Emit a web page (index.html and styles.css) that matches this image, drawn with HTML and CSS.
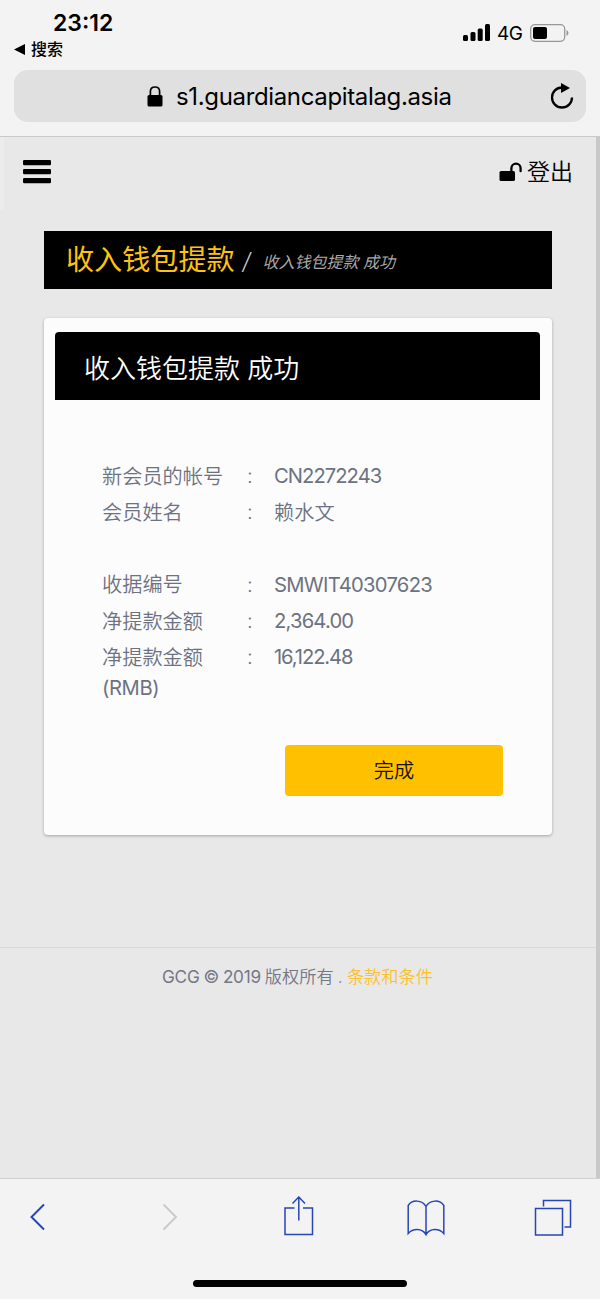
FILE: index.html
```
<!DOCTYPE html>
<html lang="zh-CN">
<head>
<meta charset="utf-8">
<meta name="viewport" content="width=device-width">
<title>收入钱包提款</title>
<link rel="stylesheet" href="styles.css">
</head>
<body>
<div class="phone">
  <header class="chrome">
    <div class="status">
      <div class="status-left">
        <div class="time">23:12</div>
        <div class="back-app">
          <svg width="11" height="11" viewBox="0 0 11 11"><path d="M0 5.5 11 0V11Z"/></svg>
          <span>搜索</span>
        </div>
      </div>
      <div class="status-right">
        <svg width="28" height="18" viewBox="0 0 28 18"><rect x="0" y="11" width="5" height="6" rx="1.5"/><rect x="7.5" y="8" width="5" height="9" rx="1.5"/><rect x="14.7" y="4.5" width="5" height="12.5" rx="1.5"/><rect x="22" y="0" width="5" height="17" rx="1.5"/></svg>
        <span class="network">4G</span>
        <svg width="39" height="18" viewBox="0 0 39 18"><rect x=".7" y=".7" width="34" height="16.6" rx="4.2" fill="none" stroke="#989898" stroke-width="1.3"/><rect x="3" y="3" width="14" height="12" rx="2"/><path d="M36.5 6Q38.5 7 38.5 9T36.5 12Z" fill="#989898"/></svg>
      </div>
    </div>
    <div class="address">
      <svg class="lock" width="16" height="21" viewBox="0 0 16 21"><path d="M3.4 10V5.4C3.4 2.4 5.3 1 8 1s4.6 1.4 4.6 4.4V10" fill="none" stroke="#000" stroke-width="1.7"/><rect x=".5" y="9" width="15" height="11.5" rx="1.5"/></svg>
      <span class="url">s1.guardiancapitalag.asia</span>
      <svg class="reload" width="24" height="27" viewBox="0 0 24 27"><path d="M12 4.5A10 10 0 1 0 22 14.5" fill="none" stroke="#000" stroke-width="2.3"/><path d="M11 0 20 5 11 10Z"/></svg>
    </div>
  </header>
  <main class="page">
    <div class="edge"></div>
    <nav class="nav">
      <svg width="28" height="24" viewBox="0 0 28 24"><rect y="0" width="28" height="5.2" rx="1.2"/><rect y="9" width="28" height="5.2" rx="1.2"/><rect y="18" width="28" height="5.2" rx="1.2"/></svg>
      <div class="logout">
        <svg width="23" height="20" viewBox="0 0 23 20"><rect x="0.5" y="9" width="15.5" height="10" rx="1.6"/><path d="M12.4 10V6.2a4.6 4.6 0 0 1 9.2 0V9.2" fill="none" stroke="#000" stroke-width="2.3" stroke-linecap="round"/></svg>
        <span>登出</span>
      </div>
    </nav>
    <div class="crumb"><span class="crumb-title">收入钱包提款</span><span class="crumb-sep">/</span><span class="crumb-sub">收入钱包提款 成功</span></div>
    <section class="card">
      <h1 class="card-head">收入钱包提款 成功</h1>
      <dl class="details">
        <dt>新会员的帐号</dt><dd class="colon">:</dd><dd class="latin w-account">CN2272243</dd>
        <dt>会员姓名</dt><dd class="colon">:</dd><dd>赖水文</dd>
        <dt class="group">收据编号</dt><dd class="colon group">:</dd><dd class="latin group w-receipt">SMWIT40307623</dd>
        <dt>净提款金额</dt><dd class="colon">:</dd><dd class="latin w-net">2,364.00</dd>
        <dt>净提款金额<br><span class="latin">(RMB)</span></dt><dd class="colon">:</dd><dd class="latin w-rmb">16,122.48</dd>
      </dl>
      <button class="done">完成</button>
    </section>
    <footer class="footer"><span class="copy">GCG © 2019 </span>版权所有 . <a class="terms">条款和条件</a></footer>
  </main>
  <div class="toolbar">
    <div class="tools">
      <svg width="16" height="28" viewBox="0 0 16 28"><path d="M14 1.5 1.5 14 14 26.5" stroke-width="2"/></svg>
      <svg class="off" width="16" height="28" viewBox="0 0 16 28"><path d="M1.5 1.5 14 14 1.5 26.5" stroke-width="1.8"/></svg>
      <svg class="share" width="30" height="40" viewBox="0 0 30 40"><path d="M10.5 12H1V38.5H28.5V12H19M14.8 24.500V1M8.500 7.500 14.800 1 21 7.500"/></svg>
      <svg class="book" width="38" height="36" viewBox="0 0 38 36"><path d="M19 6.500C15-.5 5-.5 1.200 5.500V33.500C6 28 15 28 19 34.500 23 28 32 28 36.800 33.500V5.500C33-.5 23-.5 19 6.500V35.500"/></svg>
      <svg width="38" height="37" viewBox="0 0 38 37"><path d="M1.500 9.500H28.500V36H1.500ZM9.500 7.500V1.500H36.500V28H30.500"/></svg>
    </div>
    <div class="home"></div>
  </div>
</div>
</body>
</html>
```
FILE: styles.css
```
* { box-sizing: border-box; }
body {
  margin: 0;
  background: #e8e8e8;
  color: #000;
  font-family: Inter, "Noto Sans CJK SC", sans-serif;
}
svg { display: block; flex: none; }
.phone { width: 600px; height: 1299px; display: flex; flex-direction: column; overflow: hidden; }
.chrome { height: 137px; background: #f3f3f3; border-bottom: 1px solid #c9c9c9; padding: 0 14px; }
.status { height: 70px; display: flex; justify-content: space-between; }
.status-left { padding-top: 8px; }
.time { padding-left: 39px; font-size: 23px; line-height: 30px; font-weight: 600; }
.back-app { display: flex; align-items: center; gap: 6px; height: 22px; font-size: 16px; line-height: 22px; font-weight: 500; }
.status-right { display: flex; align-items: center; height: 18px; margin: 24px 17px 0 0; }
.network { font-size: 19px; line-height: 18px; width: 26px; margin: 0 7px 0 6px; letter-spacing: -.4px; padding-top: 1px; }
.address { height: 52px; border-radius: 14px; background: #e0e0e0; display: flex; align-items: center; padding: 0 12px 0 133px; }
.url { font-size: 24px; line-height: 30px; margin: 1px 0 0 13px; letter-spacing: -.35px; white-space: nowrap; }
.reload { margin-left: auto; }
.page { height: 1041px; border-right: 4px solid #c9c9c9; display: grid; grid-template-columns: 4px 1fr; grid-template-rows: 73px auto auto 1fr; }
.edge { background: #ececec; }
.nav { display: flex; justify-content: space-between; align-items: center; height: 69px; padding: 0 23px 0 19px; }
.logout { display: flex; align-items: center; gap: 5px; font-size: 23px; line-height: 30px; font-weight: 350; }
.crumb { grid-column: 1 / 3; margin: 21px 44px 0; height: 58px; background: #000; padding-left: 22px; display: flex; align-items: center; line-height: 56px; color: #aaa; white-space: pre; }
.crumb-title { color: #ffc20e; font-size: 28.1px; }
.crumb-sep { font-size: 23px; margin: 3px 12px 0 8px; color: #ccc; font-weight: 300; font-style: oblique 8deg; }
.crumb-sub { font-size: 16px; font-style: italic; margin-top: 3px; }
.card { grid-column: 1 / 3; margin: 29px 44px 0; height: 517px; background: #fcfcfc; border-radius: 4px; padding: 14px 12px 0 11px; box-shadow: 0 1px 3px rgba(0,0,0,.3); }
.card-head { margin: 0; height: 68px; border-radius: 4px 4px 0 0; background: #000; color: #fff; font-size: 26px; font-weight: 350; line-height: 73px; padding-left: 29px; }
.details { margin: 62px 0 0 47px; display: grid; grid-template-columns: 145px 27px 1fr; row-gap: 6px; font-size: 20.2px; line-height: 30.2px; font-weight: 350; color: #6d7282; }
.details dd { margin: 0; white-space: nowrap; }
.details dd.latin, .details dd.colon { margin-top: -1px; }
.details .latin { font-weight: 400; }
.details dd.group, .details dt.group { margin-top: 36px; }
.details .w-account { letter-spacing: -.95px; }
.details .w-receipt { letter-spacing: -.7px; }
.details .w-net { letter-spacing: -.8px; }
.details .w-rmb { letter-spacing: -1.1px; }
.details dt .latin { letter-spacing: -.4px; }
.done { display: block; margin: 42px 37px 0 auto; width: 218px; height: 51px; border: 0; border-radius: 4px; background: #ffc000; color: #1a1208; font: 350 20.2px/51px Inter, "Noto Sans CJK SC", sans-serif; padding: 0; }
.footer { grid-column: 1 / 3; margin-top: 112px; border-top: 1px solid #d9d9d9; padding: 14px 0 0 162px; font-size: 17.2px; line-height: 30px; font-weight: 350; color: #747786; white-space: pre; word-spacing: -.6px; }
.copy { font-weight: 400; letter-spacing: -.25px; }
.terms { color: #fbc02d; }
.toolbar { height: 121px; background: #f3f3f3; border-top: 1px solid #cfcfcf; }
.tools { height: 79px; display: grid; grid-template-columns: 132px 122px 123px 127px 38px; align-items: center; padding: 0 0 3px 30px; }
.tools svg { fill: none; stroke: #2746b5; stroke-width: 1.5; }
.tools .off { stroke: #c9c9c9; }
.tools .share { margin-top: -2px; }
.tools .book { margin-top: 1px; }
.home { width: 214px; height: 7px; border-radius: 4px; background: #000; margin: 22px auto 0; }
```
